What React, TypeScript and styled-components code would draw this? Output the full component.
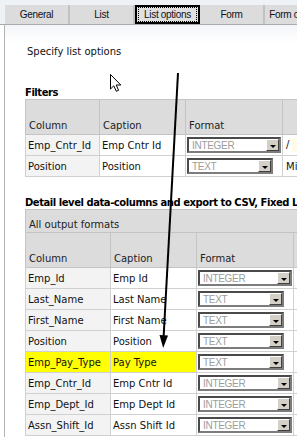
import React from "react";
import styled, { createGlobalStyle } from "styled-components";

const GlobalStyle = createGlobalStyle`
    html, body {
        margin: 0;
        padding: 0;
        background: #ffffff;
        overflow: hidden;
    }
    body {
        font-family: "DejaVu Sans", Verdana, sans-serif;
        font-size: 10px;
        color: #111111;
    }
`;

const Page = styled.div`
    position: relative;
    width: 297px;
    height: 437px;
    overflow: hidden;
    background: #ffffff;
`;

const TabBar = styled.div`
    display: flex;
    height: 19px;
    padding: 5px 0 0 5px;
    background: #eef1f5;
    border-bottom: 1px solid #a9a9a9;
`;

const Tab = styled.div<{ $active?: boolean }>`
    flex: none;
    width: 65px;
    height: 19px;
    box-sizing: border-box;
    display: flex;
    align-items: center;
    justify-content: center;
    background: ${(p) => (p.$active ? "#e0e0e0" : "#dcdcdc")};
    border: ${(p) => (p.$active ? "2px solid #000000" : "none")};
    border-right: 2px solid ${(p) => (p.$active ? "#000000" : "#c2c2c2")};
    font-family: "Liberation Sans", Arial, sans-serif;
    font-size: 10px;
    letter-spacing: -0.3px;
    color: #101020;
    white-space: nowrap;
    overflow: hidden;
`;

const TabLabel = styled.span<{ $focus?: boolean }>`
    padding: 1px 5px;
    outline: ${(p) => (p.$focus ? "1px dotted #000000" : "none")};
`;

const Content = styled.div`
    margin-left: 4px;
    border-left: 1px solid #b4b4b4;
    padding: 21px 0 0 20px;
    height: 412px;
    box-sizing: border-box;
    background: linear-gradient(#f3f5f9, #ffffff 18px);
`;

const Intro = styled.p`
    margin: 0 0 0 2px;
    line-height: 12px;
`;

const Heading = styled.h3<{ $gap: number }>`
    margin: ${(p) => p.$gap}px 0 0 0;
    font-size: 10px;
    font-weight: bold;
    letter-spacing: -0.45px;
    line-height: 12px;
    color: #000000;
    white-space: nowrap;
`;

const Table = styled.table<{ $width: number }>`
    border-collapse: collapse;
    table-layout: fixed;
    width: ${(p) => p.$width}px;
    border: 1px solid #c4c4c4;
`;

const GroupCell = styled.td`
    height: 20px;
    padding: 0 3px 2px 3px;
    vertical-align: bottom;
    background: #dcdcdc;
    border: 1px solid #c4c4c4;
    color: #222222;
    white-space: nowrap;
`;

const HeadCell = styled.th`
    height: 31px;
    padding: 0 3px 3px 3px;
    vertical-align: bottom;
    text-align: left;
    font-weight: normal;
    background: #dcdcdc;
    border: 1px solid #c4c4c4;
    color: #222222;
    white-space: nowrap;
`;

const Cell = styled.td<{ $tone?: "name" | "plain" | "mark" }>`
    height: 20px;
    padding: 0 2px;
    border: 1px solid #d0d0d0;
    white-space: nowrap;
    overflow: hidden;
    background: ${(p) =>
        p.$tone === "mark" ? "#ffff00" : p.$tone === "name" ? "#f3f3f3" : "#ffffff"};
`;

const FormatCell = styled.td`
    height: 20px;
    padding: 0 0 0 1px;
    border: 1px solid #d0d0d0;
    background: #ffffff;
`;

const SelectBox = styled.div<{ $width: number }>`
    display: flex;
    align-items: center;
    justify-content: space-between;
    width: ${(p) => p.$width}px;
    height: 16px;
    box-sizing: border-box;
    border: 2px solid;
    border-color: #4a4a4a #7c7c7c #7c7c7c #4a4a4a;
    background: #ffffff;
`;

const SelectValue = styled.span`
    padding-left: 3px;
    font-family: "Liberation Sans", Arial, sans-serif;
    font-size: 10px;
    letter-spacing: -0.3px;
    color: #9c9c9c;
`;

const DropButton = styled.span`
    display: flex;
    align-items: center;
    justify-content: center;
    width: 13px;
    height: 12px;
    box-sizing: border-box;
    background: #d4d0c8;
    border: 1px solid;
    border-color: #ffffff #404040 #404040 #ffffff;
`;

const Triangle = styled.span`
    width: 0;
    height: 0;
    border-left: 3px solid transparent;
    border-right: 3px solid transparent;
    border-top: 3px solid #000000;
    margin-top: 2px;
`;

const ExtraCell = styled.td`
    height: 20px;
    padding: 0 0 0 3px;
    border: 1px solid #d0d0d0;
    white-space: nowrap;
    overflow: hidden;
`;

const RangeInput = styled.span`
    display: inline-block;
    width: 40px;
    height: 14px;
    margin-left: 3px;
    vertical-align: middle;
    background: #fffbea;
`;

const Dot = styled.span<{ $color: string }>`
    display: inline-block;
    width: 2px;
    height: 3px;
    margin-top: 6px;
    background: ${(p) => p.$color};
`;

const Overlay = styled.svg`
    position: absolute;
    left: 0;
    top: 0;
    pointer-events: none;
`;

type Fmt = "INTEGER" | "TEXT";

const Select = ({ value }: { value: Fmt }) => (
    <SelectBox $width={value === "INTEGER" ? 94 : 86}>
        <SelectValue>{value}</SelectValue>
        <DropButton>
            <Triangle />
        </DropButton>
    </SelectBox>
);

const detailRows: { column: string; caption: string; format: Fmt; mark?: boolean }[] = [
    { column: "Emp_Id", caption: "Emp Id", format: "INTEGER" },
    { column: "Last_Name", caption: "Last Name", format: "TEXT" },
    { column: "First_Name", caption: "First Name", format: "TEXT" },
    { column: "Position", caption: "Position", format: "TEXT" },
    { column: "Emp_Pay_Type", caption: "Pay Type", format: "TEXT", mark: true },
    { column: "Emp_Cntr_Id", caption: "Emp Cntr Id", format: "INTEGER" },
    { column: "Emp_Dept_Id", caption: "Emp Dept Id", format: "INTEGER" },
    { column: "Assn_Shift_Id", caption: "Assn Shift Id", format: "INTEGER" },
];

const tabs = ["General", "List", "List options", "Form", "Form options"];

const App: React.FC = () => {
    return (
        <Page>
            <GlobalStyle />
            <TabBar>
                {tabs.map((t) => (
                    <Tab key={t} $active={t === "List options"}>
                        <TabLabel $focus={t === "List options"}>{t}</TabLabel>
                    </Tab>
                ))}
            </TabBar>
            <Content>
                <Intro>Specify list options</Intro>

                <Heading $gap={29}>Filters</Heading>
                <Table $width={360}>
                    <colgroup>
                        <col style={{ width: 74 }} />
                        <col style={{ width: 86 }} />
                        <col style={{ width: 97 }} />
                        <col style={{ width: 103 }} />
                    </colgroup>
                    <thead>
                        <tr>
                            <HeadCell>Column</HeadCell>
                            <HeadCell>Caption</HeadCell>
                            <HeadCell>Format</HeadCell>
                            <HeadCell />
                        </tr>
                    </thead>
                    <tbody>
                        <tr>
                            <Cell $tone="name">Emp_Cntr_Id</Cell>
                            <Cell>Emp Cntr Id</Cell>
                            <FormatCell>
                                <Select value="INTEGER" />
                            </FormatCell>
                            <ExtraCell>
                                /<RangeInput />
                            </ExtraCell>
                        </tr>
                        <tr>
                            <Cell $tone="name">Position</Cell>
                            <Cell>Position</Cell>
                            <FormatCell>
                                <Select value="TEXT" />
                            </FormatCell>
                            <ExtraCell>Mi</ExtraCell>
                        </tr>
                    </tbody>
                </Table>

                <Heading $gap={20}>Detail level data-columns and export to CSV, Fixed Len</Heading>
                <Table $width={370}>
                    <colgroup>
                        <col style={{ width: 85 }} />
                        <col style={{ width: 86 }} />
                        <col style={{ width: 97 }} />
                        <col style={{ width: 102 }} />
                    </colgroup>
                    <tbody>
                        <tr>
                            <GroupCell colSpan={4}>All output formats</GroupCell>
                        </tr>
                        <tr>
                            <HeadCell>Column</HeadCell>
                            <HeadCell>Caption</HeadCell>
                            <HeadCell>Format</HeadCell>
                            <HeadCell />
                        </tr>
                        {detailRows.map((r) => (
                            <tr key={r.column}>
                                <Cell $tone={r.mark ? "mark" : "name"}>{r.column}</Cell>
                                <Cell $tone={r.mark ? "mark" : "plain"}>{r.caption}</Cell>
                                <FormatCell>
                                    <Select value={r.format} />
                                </FormatCell>
                                <ExtraCell>
                                    <Dot $color={r.format === "INTEGER" ? "#b04a10" : "#eadc90"} />
                                </ExtraCell>
                            </tr>
                        ))}
                    </tbody>
                </Table>
            </Content>

            <Overlay width={297} height={437} viewBox="0 0 297 437">
                <line x1={178} y1={73} x2={163.6} y2={337} stroke="#000" strokeWidth={2} />
                <polygon points="159.5,335 168,335.5 163.2,348" fill="#000" />
                <path
                    d="M110.5 74.5 L110.5 89 L113.8 85.8 L116.3 91.3 L118.6 90.3 L116.2 85 L120.8 85 Z"
                    fill="#ffffff"
                    stroke="#000000"
                    strokeWidth={1}
                    strokeLinejoin="miter"
                />
            </Overlay>
        </Page>
    );
};

export default App;
